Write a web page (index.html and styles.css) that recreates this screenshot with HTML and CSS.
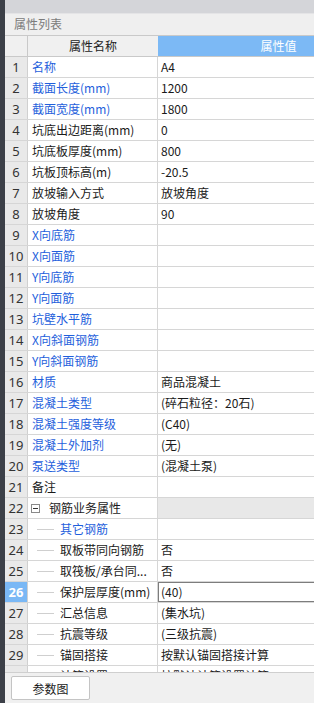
FILE: index.html
```html
<!DOCTYPE html>
<html>
<head>
<meta charset="utf-8">
<link rel="stylesheet" href="styles.css">
</head>
<body>
<div class="app">
  <div class="leftbar"></div>
  <div class="panel">
    <div class="topband"></div>
    <div class="title">属性列表</div>
    <div class="row head">
      <div class="num"></div>
      <div class="name">属性名称</div>
      <div class="val">属性值</div>
    </div>
    <div class="rows">
      <div class="row"><div class="num">1</div><div class="name blue">名称</div><div class="val">A4</div></div>
      <div class="row"><div class="num">2</div><div class="name blue">截面长度(mm)</div><div class="val">1200</div></div>
      <div class="row"><div class="num">3</div><div class="name blue">截面宽度(mm)</div><div class="val">1800</div></div>
      <div class="row"><div class="num">4</div><div class="name">坑底出边距离(mm)</div><div class="val">0</div></div>
      <div class="row"><div class="num">5</div><div class="name">坑底板厚度(mm)</div><div class="val">800</div></div>
      <div class="row"><div class="num">6</div><div class="name">坑板顶标高(m)</div><div class="val">-20.5</div></div>
      <div class="row"><div class="num">7</div><div class="name">放坡输入方式</div><div class="val">放坡角度</div></div>
      <div class="row"><div class="num">8</div><div class="name">放坡角度</div><div class="val">90</div></div>
      <div class="row"><div class="num">9</div><div class="name blue">X向底筋</div><div class="val"></div></div>
      <div class="row"><div class="num">10</div><div class="name blue">X向面筋</div><div class="val"></div></div>
      <div class="row"><div class="num">11</div><div class="name blue">Y向底筋</div><div class="val"></div></div>
      <div class="row"><div class="num">12</div><div class="name blue">Y向面筋</div><div class="val"></div></div>
      <div class="row"><div class="num">13</div><div class="name blue">坑壁水平筋</div><div class="val"></div></div>
      <div class="row"><div class="num">14</div><div class="name blue">X向斜面钢筋</div><div class="val"></div></div>
      <div class="row"><div class="num">15</div><div class="name blue">Y向斜面钢筋</div><div class="val"></div></div>
      <div class="row"><div class="num">16</div><div class="name blue">材质</div><div class="val">商品混凝土</div></div>
      <div class="row"><div class="num">17</div><div class="name blue">混凝土类型</div><div class="val">(碎石粒径：20石)</div></div>
      <div class="row"><div class="num">18</div><div class="name blue">混凝土强度等级</div><div class="val">(C40)</div></div>
      <div class="row"><div class="num">19</div><div class="name blue">混凝土外加剂</div><div class="val">(无)</div></div>
      <div class="row"><div class="num">20</div><div class="name blue">泵送类型</div><div class="val">(混凝土泵)</div></div>
      <div class="row"><div class="num">21</div><div class="name">备注</div><div class="val"></div></div>
      <div class="row"><div class="num">22</div><div class="name group"><span class="toggle"></span>钢筋业务属性</div><div class="val grey"></div></div>
      <div class="row"><div class="num">23</div><div class="name child blue"><span class="branch"></span>其它钢筋</div><div class="val"></div></div>
      <div class="row"><div class="num">24</div><div class="name child"><span class="branch"></span>取板带同向钢筋</div><div class="val">否</div></div>
      <div class="row"><div class="num">25</div><div class="name child"><span class="branch"></span>取筏板/承台同...</div><div class="val">否</div></div>
      <div class="row selected"><div class="num">26</div><div class="name child"><span class="branch"></span>保护层厚度(mm)</div><div class="val">(40)</div></div>
      <div class="row"><div class="num">27</div><div class="name child"><span class="branch"></span>汇总信息</div><div class="val">(集水坑)</div></div>
      <div class="row"><div class="num">28</div><div class="name child"><span class="branch"></span>抗震等级</div><div class="val">(三级抗震)</div></div>
      <div class="row"><div class="num">29</div><div class="name child"><span class="branch"></span>锚固搭接</div><div class="val">按默认锚固搭接计算</div></div>
      <div class="row"><div class="num">30</div><div class="name child"><span class="branch"></span>计算设置</div><div class="val">按默认计算设置计算</div></div>
    </div>
    <div class="footer">
      <button class="btn">参数图</button>
    </div>
  </div>
</div>
</body>
</html>
```

FILE: styles.css
```css
* { box-sizing: border-box; }
html, body {
  margin: 0;
  padding: 0;
  width: 314px;
  height: 703px;
  overflow: hidden;
  font-family: "Noto Sans CJK SC", "Noto Sans", sans-serif;
  font-size: 12px;
  color: #1a1a1a;
}
.app {
  display: flex;
  width: 314px;
  height: 703px;
}
.leftbar {
  width: 5px;
  flex: none;
  background: #3c4048;
}
.panel {
  flex: 1;
  min-width: 0;
  display: flex;
  flex-direction: column;
  overflow: hidden;
  background: #ffffff;
}
.topband {
  height: 14px;
  flex: none;
  background: #d4d5d9;
  border-bottom: 1px solid #e4e4e6;
}
.title {
  height: 22px;
  flex: none;
  background: #efefef;
  border-bottom: 1px solid #c9c9c9;
  color: #7b7b7b;
  font-size: 12px;
  line-height: 20px;
  padding-left: 9px;
}
.row {
  display: flex;
  height: 21px;
  flex: none;
  border-bottom: 1px solid #d6d6d6;
  width: 394px;
}
.num {
  width: 23px;
  flex: none;
  background: #e9e9e9;
  border-right: 1px solid #d0d0d0;
  text-align: center;
  font-family: "Noto Sans", sans-serif;
  font-size: 13px;
  line-height: 20px;
  color: #333;
}
.name {
  width: 130px;
  flex: none;
  border-right: 1px solid #d6d6d6;
  padding-left: 4px;
  line-height: 20px;
  white-space: nowrap;
  overflow: hidden;
  display: flex;
  align-items: center;
}
.val {
  flex: 1;
  padding-left: 3px;
  line-height: 20px;
  white-space: nowrap;
  overflow: hidden;
  position: relative;
}
.blue { color: #1f5fdc; }
.grey { background: #e8e8e8; }

.head {
  height: 21px;
  border-bottom: 1px solid #c9c9c9;
}
.head .num { background: #f0f0f0; border-right-color: #c9c9c9; }
.head .name {
  background: #f0f0f0;
  justify-content: center;
  padding-left: 0;
  border-right: none;
  color: #222;
}
.head .val {
  background: #7cb9f5;
  color: #ffffff;
  text-align: center;
  padding-left: 0;
}

.rows {
  flex: 1;
  overflow: hidden;
  min-height: 0;
}

.toggle {
  width: 9px;
  height: 9px;
  border: 1px solid #8a8a8a;
  margin-left: -1px;
  margin-right: 9px;
  flex: none;
  position: relative;
  background: #fff;
}
.toggle::after {
  content: "";
  position: absolute;
  left: 1px;
  right: 1px;
  top: 3px;
  height: 1px;
  background: #333;
}
.child { padding-left: 9px; }
.branch {
  width: 17px;
  height: 1px;
  background: #cfcfcf;
  margin-right: 6px;
  flex: none;
}

.selected .num {
  background: #7ab8f5;
  color: #ffffff;
  font-weight: bold;
}
.selected .val::after {
  content: "";
  position: absolute;
  left: -1px;
  top: -1px;
  right: 0;
  bottom: -1px;
  border: 2px solid #7d7d7d;
}

.footer {
  height: 31px;
  flex: none;
  background: #f0f0f0;
  border-top: 1px solid #cfcfcf;
  padding: 3px 0 0 6px;
}
.btn {
  width: 79px;
  height: 24px;
  background: #ffffff;
  border: 1px solid #c4c4c4;
  border-radius: 2px;
  font-family: "Noto Sans CJK SC", sans-serif;
  font-size: 12px;
  color: #1a1a1a;
  padding: 0;
}
```
